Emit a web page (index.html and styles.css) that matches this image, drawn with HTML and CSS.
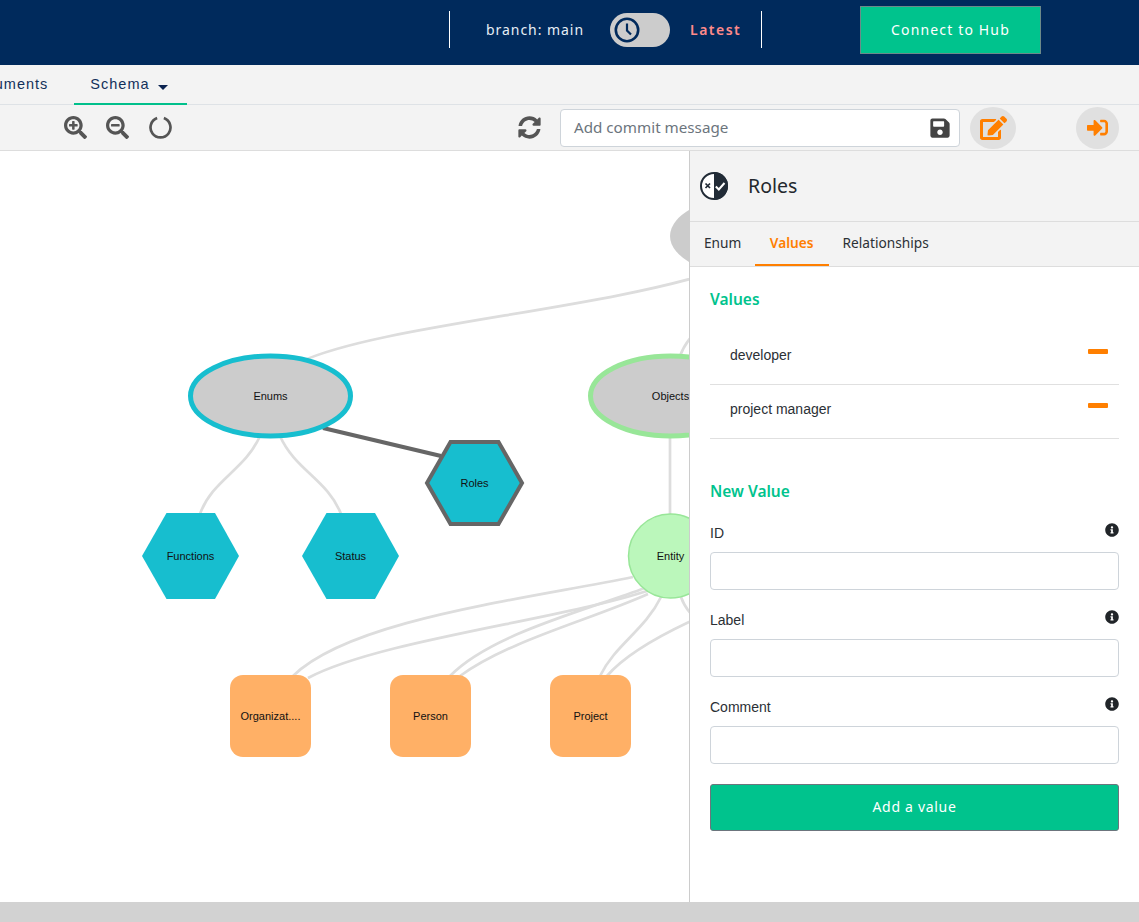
FILE: index.html
```html
<!DOCTYPE html>
<html lang="en">
<head>
    <meta charset="UTF-8">
    <title>Schema</title>
    <link rel="stylesheet" href="styles.css">
</head>
<body>

    <header class="topbar">
        <div class="branch-group">
            <span class="branch-name">branch: main</span>
            <div class="toggle">
                <svg class="toggle-clock" viewBox="0 0 26 26">
                    <circle cx="13" cy="13" r="11.2" fill="none" stroke="#002a5c" stroke-width="2.6"/>
                    <path d="M13 6.5V13.5L17 17.5" fill="none" stroke="#002a5c" stroke-width="2.2"/>
                </svg>
            </div>
            <span class="latest">Latest</span>
        </div>
        <button class="hub-button">Connect to Hub</button>
    </header>

    <nav class="tabs">
        <a class="tab">Documents</a>
        <a class="tab tab-active">Schema <span class="caret"></span></a>
    </nav>

    <div class="toolbar">
        <svg class="tool-icon zoom-in" viewBox="0 0 512 512"><path d="M304 192v32c0 6.6-5.4 12-12 12h-56v56c0 6.6-5.4 12-12 12h-32c-6.6 0-12-5.4-12-12v-56h-56c-6.6 0-12-5.4-12-12v-32c0-6.6 5.4-12 12-12h56v-56c0-6.6 5.4-12 12-12h32c6.6 0 12 5.4 12 12v56h56c6.6 0 12 5.4 12 12zm201 284.7L476.7 505c-9.4 9.4-24.6 9.4-33.9 0L343 405.3c-4.5-4.5-7-10.6-7-17V372c-35.3 27.6-79.7 44-128 44C93.1 416 0 322.9 0 208S93.1 0 208 0s208 93.1 208 208c0 48.3-16.4 92.7-44 128h16.3c6.4 0 12.5 2.5 17 7l99.7 99.7c9.3 9.4 9.3 24.6 0 34zM344 208c0-75.2-60.8-136-136-136S72 132.8 72 208s60.8 136 136 136 136-60.8 136-136z"/></svg>
        <svg class="tool-icon zoom-out" viewBox="0 0 512 512"><path d="M304 192v32c0 6.6-5.4 12-12 12H124c-6.6 0-12-5.4-12-12v-32c0-6.6 5.4-12 12-12h168c6.6 0 12 5.4 12 12zm201 284.7L476.7 505c-9.4 9.4-24.6 9.4-33.9 0L343 405.3c-4.5-4.5-7-10.6-7-17V372c-35.3 27.6-79.7 44-128 44C93.1 416 0 322.9 0 208S93.1 0 208 0s208 93.1 208 208c0 48.3-16.4 92.7-44 128h16.3c6.4 0 12.5 2.5 17 7l99.7 99.7c9.3 9.4 9.3 24.6 0 34zM344 208c0-75.2-60.8-136-136-136S72 132.8 72 208s60.8 136 136 136 136-60.8 136-136z"/></svg>
        <svg class="tool-icon zoom-reset" viewBox="0 0 24 24"><path d="M15.5 2.2A10.4 10.4 0 1 1 8.5 2.2" fill="none" stroke="#555" stroke-width="2.8"/></svg>
        <svg class="tool-icon refresh" viewBox="0 0 512 512"><path d="M370.72 133.28C339.458 104.008 298.888 87.962 255.848 88c-77.458.068-144.328 53.178-162.791 126.85-1.344 5.363-6.122 9.15-11.651 9.15H24.103c-7.498 0-13.194-6.807-11.807-14.176C33.933 94.924 134.813 8 256 8c66.448 0 126.791 26.136 171.315 68.685L463.03 40.97C478.149 25.851 504 36.559 504 57.941V192c0 13.255-10.745 24-24 24H345.941c-21.382 0-32.09-25.851-16.971-40.971l41.75-41.749zM32 296h134.059c21.382 0 32.09 25.851 16.971 40.971l-41.75 41.75c31.262 29.273 71.835 45.319 114.876 45.28 77.418-.07 144.315-53.144 162.787-126.849 1.344-5.363 6.122-9.15 11.651-9.15h57.304c7.498 0 13.194 6.807 11.807 14.176C478.067 417.076 377.187 504 256 504c-66.448 0-126.791-26.136-171.315-68.685L48.97 471.03C33.851 486.149 8 475.441 8 454.059V320c0-13.255 10.745-24 24-24z"/></svg>
        <div class="commit-box">
            <span class="commit-placeholder">Add commit message</span>
            <svg class="save-icon" viewBox="0 0 448 512"><path d="M433.941 129.941l-83.882-83.882A48 48 0 0 0 316.118 32H48C21.49 32 0 53.49 0 80v352c0 26.51 21.49 48 48 48h352c26.51 0 48-21.49 48-48V163.882a48 48 0 0 0-14.059-33.941zM224 416c-35.346 0-64-28.654-64-64 0-35.346 28.654-64 64-64s64 28.654 64 64c0 35.346-28.654 64-64 64zm96-304.52V212c0 6.627-5.373 12-12 12H76c-6.627 0-12-5.373-12-12V108c0-6.627 5.373-12 12-12h228.52c3.183 0 6.235 1.264 8.485 3.515l3.48 3.48A11.996 11.996 0 0 1 320 111.48z"/></svg>
        </div>
        <div class="round-btn edit-btn">
            <svg class="edit-icon" viewBox="0 0 576 512"><path d="M402.6 83.2l90.2 90.2c3.8 3.8 3.8 10 0 13.8L274.4 405.6l-92.8 10.3c-12.4 1.4-22.9-9.1-21.5-21.5l10.3-92.8L388.8 83.2c3.8-3.8 10-3.8 13.8 0zm162-22.9l-48.8-48.8c-15.2-15.2-39.9-15.2-55.2 0l-35.4 35.4c-3.8 3.8-3.8 10 0 13.8l90.2 90.2c3.8 3.8 10 3.8 13.8 0l35.4-35.4c15.2-15.3 15.2-40 0-55.2zM384 346.2V448H64V128h229.8c3.2 0 6.2-1.3 8.5-3.5l40-40c7.6-7.6 2.2-20.5-8.5-20.5H48C21.5 64 0 85.5 0 112v352c0 26.5 21.5 48 48 48h352c26.5 0 48-21.5 48-48V306.2c0-10.7-12.9-16-20.5-8.5l-40 40c-2.2 2.3-3.5 5.3-3.5 8.5z"/></svg>
        </div>
        <div class="round-btn exit-btn">
            <svg class="exit-icon" viewBox="0 0 512 512"><path d="M416 448h-84c-6.6 0-12-5.4-12-12v-40c0-6.6 5.4-12 12-12h84c17.7 0 32-14.3 32-32V160c0-17.7-14.3-32-32-32h-84c-6.6 0-12-5.4-12-12V76c0-6.6 5.4-12 12-12h84c53 0 96 43 96 96v192c0 53-43 96-96 96zm-47-201L201 79c-15-15-41-4.5-41 17v96H24c-13.3 0-24 10.7-24 24v96c0 13.3 10.7 24 24 24h136v96c0 21.5 26 32 41 17l168-168c9.3-9.4 9.3-24.6 0-34z"/></svg>
        </div>
    </div>

    <main class="workspace">
        <div class="graph">
            <svg class="graph-svg" viewBox="0 151 689 751" width="689" height="751">
                <g class="edges">
                    <path d="M300 362C380 325 600 310 720 270"/>
                    <path d="M680 356Q684 345 692 336"/>
                    <path d="M260 436C245 470 212 480 200 514"/>
                    <path d="M280 436C295 470 328 480 341 514"/>
                    <path d="M670 436V514"/>
                    <path d="M633 577C520 600 350 620 293 676"/>
                    <path d="M650 590C560 620 380 640 308 678"/>
                    <path d="M645 588C580 612 490 635 450 676"/>
                    <path d="M648 594C590 620 510 640 460 676"/>
                    <path d="M661 597C645 630 615 645 600 676"/>
                    <path d="M700 617C660 635 625 655 607 676"/>
                    <path d="M681 597Q684 606 692 615"/>
                </g>
                <path class="edge-selected" d="M323 428L441 456"/>

                <ellipse class="node-plain" cx="750" cy="236" rx="80" ry="40"/>
                <ellipse class="node-enums" cx="270.5" cy="396" rx="80" ry="40"/>
                <ellipse class="node-objects" cx="670.5" cy="396" rx="80" ry="40"/>
                <polygon class="node-hex" points="142,556 166.5,513 215,513 239,556 215,599 166.5,599"/>
                <polygon class="node-hex" points="302,556 326.5,513 375,513 399,556 375,599 326.5,599"/>
                <polygon class="node-hex node-hex-selected" points="427,483 450.5,442 498.5,442 522,483 498.5,524 450.5,524"/>
                <circle class="node-entity" cx="670.5" cy="556" r="42"/>
                <rect class="node-doc" x="230" y="675" width="81" height="82" rx="13"/>
                <rect class="node-doc" x="390" y="675" width="81" height="82" rx="13"/>
                <rect class="node-doc" x="550" y="675" width="81" height="82" rx="13"/>

                <text x="270.5" y="400">Enums</text>
                <text x="670.5" y="400">Objects</text>
                <text x="190.5" y="560">Functions</text>
                <text x="350.5" y="560">Status</text>
                <text x="474.5" y="487">Roles</text>
                <text x="670.5" y="560">Entity</text>
                <text x="270.5" y="720">Organizat....</text>
                <text x="430.5" y="720">Person</text>
                <text x="590.5" y="720">Project</text>
            </svg>
        </div>

        <aside class="panel">
            <div class="panel-head">
                <svg class="enum-icon" viewBox="0 0 28 28">
                    <circle cx="14" cy="14" r="13" fill="#fff" stroke="#212b36" stroke-width="2"/>
                    <path d="M14 0A14 14 0 0 1 14 28Z" fill="#212b36"/>
                    <path d="M5.5 11.5L10 16M10 11.5L5.5 16" stroke="#212b36" stroke-width="1.7" fill="none"/>
                    <path d="M15.8 14.5L18.8 17.5L24.5 11" stroke="#fff" stroke-width="2" fill="none"/>
                </svg>
                <span class="panel-title">Roles</span>
            </div>
            <div class="panel-tabs">
                <a class="panel-tab">Enum</a>
                <a class="panel-tab panel-tab-active">Values</a>
                <a class="panel-tab">Relationships</a>
            </div>
            <div class="panel-body">
                <h2 class="section-title">Values</h2>
                <ul class="value-list">
                    <li class="value-row"><span>developer</span><i class="minus"></i></li>
                    <li class="value-row"><span>project manager</span><i class="minus"></i></li>
                </ul>

                <h2 class="section-title new-value">New Value</h2>
                <div class="field">
                    <div class="field-label"><label>ID</label><svg class="info" viewBox="0 0 512 512"><path d="M256 8C119.043 8 8 119.083 8 256c0 136.997 111.043 248 248 248s248-111.003 248-248C504 119.083 392.957 8 256 8zm0 110c23.196 0 42 18.804 42 42s-18.804 42-42 42-42-18.804-42-42 18.804-42 42-42zm56 254c0 6.627-5.373 12-12 12h-88c-6.627 0-12-5.373-12-12v-24c0-6.627 5.373-12 12-12h12v-64h-12c-6.627 0-12-5.373-12-12v-24c0-6.627 5.373-12 12-12h64c6.627 0 12 5.373 12 12v100h12c6.627 0 12 5.373 12 12v24z"/></svg></div>
                    <input type="text">
                </div>
                <div class="field">
                    <div class="field-label"><label>Label</label><svg class="info" viewBox="0 0 512 512"><path d="M256 8C119.043 8 8 119.083 8 256c0 136.997 111.043 248 248 248s248-111.003 248-248C504 119.083 392.957 8 256 8zm0 110c23.196 0 42 18.804 42 42s-18.804 42-42 42-42-18.804-42-42 18.804-42 42-42zm56 254c0 6.627-5.373 12-12 12h-88c-6.627 0-12-5.373-12-12v-24c0-6.627 5.373-12 12-12h12v-64h-12c-6.627 0-12-5.373-12-12v-24c0-6.627 5.373-12 12-12h64c6.627 0 12 5.373 12 12v100h12c6.627 0 12 5.373 12 12v24z"/></svg></div>
                    <input type="text">
                </div>
                <div class="field">
                    <div class="field-label"><label>Comment</label><svg class="info" viewBox="0 0 512 512"><path d="M256 8C119.043 8 8 119.083 8 256c0 136.997 111.043 248 248 248s248-111.003 248-248C504 119.083 392.957 8 256 8zm0 110c23.196 0 42 18.804 42 42s-18.804 42-42 42-42-18.804-42-42 18.804-42 42-42zm56 254c0 6.627-5.373 12-12 12h-88c-6.627 0-12-5.373-12-12v-24c0-6.627 5.373-12 12-12h12v-64h-12c-6.627 0-12-5.373-12-12v-24c0-6.627 5.373-12 12-12h64c6.627 0 12 5.373 12 12v100h12c6.627 0 12 5.373 12 12v24z"/></svg></div>
                    <input type="text">
                </div>
                <button class="add-button">Add a value</button>
            </div>
        </aside>
    </main>

    <div class="bottom-bar"></div>

</body>
</html>
```

FILE: styles.css
```css
* {
    box-sizing: border-box;
}
html, body {
    margin: 0;
    height: 922px;
    overflow: hidden;
}
body {
    font-family: "Liberation Sans", Arial, sans-serif;
    font-size: 14px;
    color: #2b3035;
    background-color: #fff;
}
.topbar {
    height: 65px;
    background-color: #002a5c;
    display: flex;
    align-items: center;
    padding-left: 449px;
}
.branch-group {
    width: 313px;
    height: 37px;
    margin-top: -6px;
    border-left: 1px solid #fff;
    border-right: 1px solid #fff;
    display: flex;
    align-items: center;
    padding-left: 36px;
}
.branch-name {
    width: 124px;
    color: #e6eef5;
    font-family: "Noto Sans", sans-serif;
    font-size: 14px;
    letter-spacing: 0.95px;
}
.toggle {
    width: 60px;
    height: 34px;
    margin-top: 1px;
    border-radius: 17px;
    background-color: #ccc;
    display: flex;
    align-items: center;
    padding-left: 4px;
}
.toggle-clock {
    width: 26px;
    height: 26px;
}
.latest {
    margin-left: 20px;
    color: #ff8a8a;
    font-family: "Noto Sans", sans-serif;
    font-size: 14px;
    font-weight: 600;
    letter-spacing: 1.5px;
}
.hub-button {
    margin-left: 98px;
    margin-top: -5px;
    width: 181px;
    height: 48px;
    padding-bottom: 3px;
    background-color: #00c38d;
    border: 1px solid #6c8a8a;
    color: #fff;
    font-family: "Noto Sans", sans-serif;
    font-size: 14px;
    letter-spacing: 1.15px;
}
.tabs {
    height: 40px;
    background-color: #f3f3f3;
    border-bottom: 1px solid #dee2e6;
    display: flex;
    margin-left: -51px;
}
.tab {
    height: 40px;
    padding: 11px 17px 0;
    color: #12305a;
    font-size: 14.5px;
    letter-spacing: 1px;
}
.tab-active {
    width: 113px;
    margin-left: 9px;
    padding-left: 16px;
    border-bottom: 2px solid #00c08b;
}
.caret {
    display: inline-block;
    width: 0;
    height: 0;
    margin-left: 3px;
    border-left: 5px solid transparent;
    border-right: 5px solid transparent;
    border-top: 5px solid #0b2350;
    vertical-align: -1px;
}
.toolbar {
    height: 46px;
    background-color: #f3f3f3;
    border-bottom: 1px solid #ddd;
    display: flex;
    align-items: center;
    padding-left: 64px;
}
.tool-icon {
    width: 23px;
    height: 23px;
    fill: #555;
}
.zoom-out {
    margin-left: 19px;
}
.zoom-reset {
    margin-left: 20px;
}
.refresh {
    margin-left: 346px;
}
.commit-box {
    margin-left: 19px;
    width: 400px;
    height: 38px;
    background-color: #fff;
    border: 1px solid #ced4da;
    border-radius: 4px;
    display: flex;
    align-items: center;
    justify-content: space-between;
    padding: 0 9px 0 13px;
}
.commit-placeholder {
    margin-top: -2px;
    color: #6c757d;
    font-family: "Noto Sans", sans-serif;
    font-size: 15.2px;
}
.save-icon {
    width: 20px;
    height: 22px;
    fill: #444;
}
.round-btn {
    height: 42px;
    background-color: #e0e0e0;
    border-radius: 50%;
    display: flex;
    align-items: center;
    justify-content: center;
}
.edit-btn {
    width: 46px;
    margin-left: 10px;
}
.exit-btn {
    width: 43px;
    margin-left: 60px;
}
.edit-icon {
    width: 27px;
    height: 24px;
    fill: #ff7f00;
}
.exit-icon {
    width: 23px;
    height: 21px;
    fill: #ff7f00;
}
.workspace {
    height: 751px;
    display: flex;
}
.graph {
    width: 689px;
    overflow: hidden;
}
.graph-svg {
    display: block;
}
.graph-svg text {
    font-size: 11px;
    fill: #111;
    text-anchor: middle;
}
.edges path {
    fill: none;
    stroke: #ddd;
    stroke-width: 2.7;
}
.edge-selected {
    fill: none;
    stroke: #666;
    stroke-width: 4;
}
.node-plain {
    fill: #ccc;
}
.node-enums {
    fill: #ccc;
    stroke: #17becf;
    stroke-width: 5;
}
.node-objects {
    fill: #ccc;
    stroke: #98e698;
    stroke-width: 5;
}
.node-hex {
    fill: #17becf;
}
.node-hex-selected {
    stroke: #666;
    stroke-width: 4;
}
.node-entity {
    fill: #bbf7bb;
    stroke: #98e698;
    stroke-width: 1.5;
}
.node-doc {
    fill: #ffb066;
}
.panel {
    width: 450px;
    border-left: 1px solid #ccc;
    background-color: #fff;
}
.panel-head {
    height: 71px;
    background-color: #f3f3f3;
    border-bottom: 1px solid #ddd;
    display: flex;
    align-items: center;
    padding-left: 10px;
}
.enum-icon {
    width: 28px;
    height: 28px;
}
.panel-title {
    margin-top: -2px;
    margin-left: 20px;
    font-family: "Noto Sans", sans-serif;
    font-size: 19.5px;
    color: #23282d;
}
.panel-tabs {
    height: 45px;
    background-color: #f3f3f3;
    border-bottom: 1px solid #ddd;
    display: flex;
}
.panel-tab {
    padding: 11px 14px 0;
    font-family: "Noto Sans", sans-serif;
    font-size: 13.7px;
    color: #2b3035;
}
.panel-tab-active {
    padding-right: 15px;
    padding-left: 14.5px;
    color: #ff7f00;
    font-weight: 600;
    border-bottom: 2px solid #ff7f00;
}
.panel-body {
    padding: 0 20px;
}
.section-title {
    margin: 0;
    padding-top: 21px;
    font-family: "Noto Sans", sans-serif;
    font-size: 15.5px;
    font-weight: 600;
    line-height: 22px;
    color: #00c38d;
}
.value-list {
    list-style: none;
    margin: 21px 0 0;
    padding: 0;
}
.value-row {
    height: 54px;
    border-bottom: 1px solid #e0e0e0;
    display: flex;
    justify-content: space-between;
    align-items: flex-start;
    padding: 16px 11px 0 20px;
    line-height: 16px;
}
.minus {
    width: 20px;
    height: 5px;
    margin-top: 2px;
    background-color: #ff7f00;
    border-radius: 1px;
}
.new-value {
    padding-top: 0;
    margin-top: 41px;
}
.new-value + .field {
    margin-top: 19px;
}
.field + .field {
    margin-top: 18px;
}
.field-label {
    height: 31px;
    display: flex;
    justify-content: space-between;
    align-items: flex-start;
}
.field-label label {
    margin-top: 4px;
    line-height: 16px;
}
.info {
    width: 14px;
    height: 14px;
    margin-top: 2px;
    fill: #212529;
}
.field input {
    display: block;
    width: 100%;
    height: 38px;
    border: 1px solid #ced4da;
    border-radius: 4px;
    background-color: #fff;
}
.add-button {
    display: block;
    width: 100%;
    height: 47px;
    margin-top: 20px;
    padding-bottom: 3px;
    background-color: #00c38d;
    border: 1px solid #6c757d;
    border-radius: 3px;
    color: #fff;
    font-family: "Noto Sans", sans-serif;
    font-size: 14px;
    letter-spacing: 0.7px;
}
.bottom-bar {
    height: 20px;
    background-color: #d2d2d2;
}
```
